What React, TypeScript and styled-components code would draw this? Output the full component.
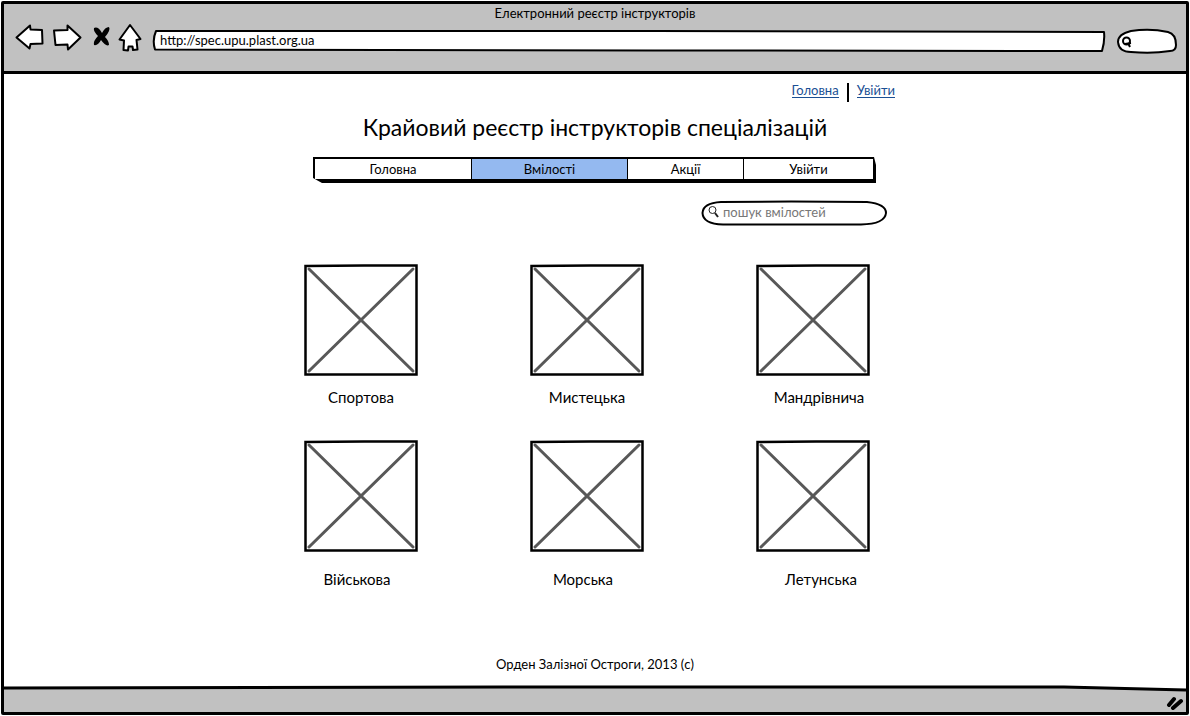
import React from "react";
import styled, { createGlobalStyle } from "styled-components";

const ink = "#000";
const chrome = "#c1c1c1";

const GlobalStyle = createGlobalStyle`
  * { box-sizing: border-box; }
  body {
    margin: 0;
    background: #fff;
    color: ${ink};
    font-family: Lato, "Noto Sans", sans-serif;
    font-size: 13px;
    line-height: 16px;
  }
  input, button { font: inherit; color: inherit; }
`;

const Window = styled.div`
  display: flex;
  flex-direction: column;
  min-height: 100vh;
  padding: 1px;
`;

const Frame = styled.div`
  flex: 1;
  display: flex;
  flex-direction: column;
  border: 3px solid ${ink};
  border-radius: 2px;
`;

const Chrome = styled.header`
  height: 70px;
  background: ${chrome};
  border-bottom: 3px solid ${ink};
`;

const WindowTitle = styled.div`
  padding-top: 1px;
  text-align: center;
`;

const Toolbar = styled.div`
  display: flex;
  align-items: center;
  padding: 0 8px 0 10px;
`;

const ToolButton = styled.button<{ $width: number }>`
  width: ${(p) => p.$width}px;
  height: 34px;
  padding: 0;
  border: 0;
  background: none;
  svg { display: block; }
`;

const Field = styled.label`
  position: relative;
  display: flex;
  align-items: center;
  height: 26px;
`;

const AddressField = styled(Field)`
  flex: 1;
  margin: 6px 12px 0 6px;
`;

const BrowserSearch = styled(Field)`
  width: 62px;
  margin-top: 6px;
`;

const Outline = styled.svg`
  position: absolute;
  inset: 0;
  width: 100%;
  height: 100%;
  overflow: visible;
  pointer-events: none;
`;

const FieldIcon = styled.svg`
  position: relative;
  flex: none;
`;

const TextInput = styled.input`
  position: relative;
  flex: 1;
  min-width: 0;
  padding: 0;
  border: 0;
  outline: 0;
  background: transparent;
  &::placeholder { color: #777; opacity: 1; }
`;

const AddressInput = styled(TextInput)`
  padding: 0 8px 2px;
`;

const Page = styled.main`
  flex: 1;
  display: flex;
  flex-direction: column;
  width: 100%;
  max-width: 600px;
  margin: 0 auto;
  padding-top: 9px;
`;

const AccountLinks = styled.nav`
  display: flex;
  justify-content: flex-end;
  gap: 8px;
  height: 19px;
`;

const AccountLink = styled.a`
  height: 15px;
  line-height: 14px;
  color: #1a4f94;
  text-decoration: none;
  border-bottom: 1px solid #1a4f94;
`;

const Divider = styled.span`
  width: 2px;
  background: ${ink};
`;

const Heading = styled.h1`
  margin: 10px 0 0;
  font-size: 23px;
  font-weight: 400;
  line-height: 30px;
  text-align: center;
  white-space: nowrap;
`;

const MenuBar = styled.nav`
  display: grid;
  grid-template-columns: 156fr 156fr 116fr 130fr;
  margin: 15px 19px 0 18px;
  height: 26px;
  border: solid ${ink};
  border-width: 2px 3px 4px 2px;
  clip-path: polygon(0 0, calc(100% - 2px) 0, 100% 8px, 100% 100%, 9px 100%, 0 21px);
`;

const MenuItem = styled.a<{ $active?: boolean }>`
  color: inherit;
  text-align: center;
  text-decoration: none;
  line-height: 20px;
  background: ${(p) => (p.$active ? "#94b9f0" : "#fff")};
  & + & { border-left: 1px solid ${ink}; }
`;

const SkillSearch = styled(Field)`
  align-self: flex-end;
  width: 186px;
  height: 26px;
  margin: 17px 8px 0 0;
  padding: 0 12px 2px 7px;
  gap: 4px;
`;

const Gallery = styled.div`
  display: flex;
  flex-direction: column;
  gap: 34px;
  padding: 38px 0 0 9px;
`;

const GalleryRow = styled.div<{ $gap: number; $last: number; $inset: number }>`
  display: grid;
  grid-template-columns: 114px 114px ${(p) => p.$last}px;
  column-gap: 112px;
  figure { gap: ${(p) => p.$gap}px; }
  figcaption { padding-right: ${(p) => p.$inset}px; }
`;

const Card = styled.figure`
  display: flex;
  flex-direction: column;
  margin: 0;
`;

const Caption = styled.figcaption`
  font-size: 15px;
  line-height: 18px;
  text-align: center;
`;

const Copyright = styled.footer`
  margin: auto 0 0;
  padding: 24px 0 15px;
  text-align: center;
`;

const StatusBar = styled.div`
  position: relative;
  display: flex;
  align-items: center;
  justify-content: flex-end;
  height: 25px;
  padding: 6px 2px 0 0;
  background: ${chrome};
`;

const Placeholder = () => (
  <svg width="114" height="112" fill="none" aria-hidden="true">
    <path d="M5 5L109 107M109 5L5 107" stroke="#585858" strokeWidth="3" strokeLinecap="round" />
    <path d="M1.500 2L60 1.500L112.500 1.500L112.500 110.500L1.500 110.500Z" stroke={ink} strokeWidth="2.500" />
  </svg>
);

const rows = [
  { gap: 12, last: 126, inset: 0, names: ["Спортова", "Мистецька", "Мандрівнича"] },
  { gap: 18, last: 138, inset: 8, names: ["Військова", "Морська", "Летунська"] },
];

export default function App() {
  return (
    <Window>
      <GlobalStyle />
      <Frame>
        <Chrome>
          <WindowTitle>Електронний реєстр інструкторів</WindowTitle>
          <Toolbar>
            <ToolButton $width={36} aria-label="Назад">
              <svg width="36" height="34" fill="#fff" stroke={ink} strokeWidth="2" strokeLinejoin="round">
                <path d="M2.500 16.500L16 4.500L16.500 8.500L28 9L28.500 22.500L16.500 23L15.500 27.500Z" />
              </svg>
            </ToolButton>
            <ToolButton $width={40} aria-label="Вперед">
              <svg width="40" height="34" fill="#fff" stroke={ink} strokeWidth="2" strokeLinejoin="round">
                <path d="M4 9.500L17.500 9L17.500 4.500L30.500 16.500L18 28.500L17.500 23.500L5.500 24Z" />
              </svg>
            </ToolButton>
            <ToolButton $width={28} aria-label="Зупинити">
              <svg width="28" height="34" fill={ink}>
                <path d="M4 7Q8 5 12 12Q15 6 19 6Q21 9 15 16Q19 20 19 24Q16 26 11 19Q8 25 4 24Q3 20 8 15Q3 10 4 7Z" />
              </svg>
            </ToolButton>
            <ToolButton $width={28} aria-label="Додому">
              <svg width="28" height="34" fill="#fff" stroke={ink} strokeWidth="2" strokeLinejoin="round">
                <path d="M12 4L22.500 18L18.500 19L19.500 28.500L15 29L14.500 25.500L10.500 25.500L10 29.500L5.500 29L6 19.500L1.500 18.500Z" />
              </svg>
            </ToolButton>
            <AddressField>
              <Outline viewBox="0 0 948 26" preserveAspectRatio="none" aria-hidden="true">
                <path
                  d="M4 3L500 3L948 4Q949 13 946 23L500 22.500L3 21.500Q0 12 4 3Z"
                  fill="#fff" stroke={ink} strokeWidth="2" strokeLinejoin="round"
                />
              </Outline>
              <AddressInput aria-label="Адреса" defaultValue="http://spec.upu.plast.org.ua" />
            </AddressField>
            <BrowserSearch>
              <Outline viewBox="0 0 62 26" preserveAspectRatio="none" aria-hidden="true">
                <path
                  d="M15 3Q34 0 52 4Q60 6 60 17Q60 23 54 23Q36 26 15 24Q3 24 2 14Q2 6 15 3Z"
                  fill="#fff" stroke={ink} strokeWidth="2"
                />
              </Outline>
              <FieldIcon width="17" height="26" fill="none" stroke={ink} strokeWidth="2" aria-hidden="true">
                <circle cx="10.500" cy="13" r="3.500" />
                <path d="M9 16L15 15M12 15L14 19" />
              </FieldIcon>
              <TextInput aria-label="Пошук" />
            </BrowserSearch>
          </Toolbar>
        </Chrome>

        <Page>
          <AccountLinks>
            <AccountLink href="#home">Головна</AccountLink>
            <Divider />
            <AccountLink href="#login">Увійти</AccountLink>
          </AccountLinks>
          <Heading>Крайовий реєстр інструкторів спеціалізацій</Heading>
          <MenuBar>
            <MenuItem href="#home">Головна</MenuItem>
            <MenuItem href="#skills" $active>Вмілості</MenuItem>
            <MenuItem href="#events">Акції</MenuItem>
            <MenuItem href="#login">Увійти</MenuItem>
          </MenuBar>
          <SkillSearch>
            <Outline viewBox="0 0 186 26" preserveAspectRatio="none" aria-hidden="true">
              <path
                d="M20 2L90 1.500L166 2Q185 4 185 13Q184 24 160 24.500L22 24.500Q2 24 1.500 13Q2 3 20 2Z"
                fill="#fff" stroke={ink} strokeWidth="2"
              />
            </Outline>
            <FieldIcon width="11" height="14" fill="none" stroke="#222" aria-hidden="true">
              <circle cx="4.500" cy="5" r="3.500" />
              <path d="M7 8L10 12" strokeWidth="2" />
            </FieldIcon>
            <TextInput aria-label="Пошук вмілостей" placeholder="пошук вмілостей" />
          </SkillSearch>
          <Gallery>
            {rows.map((row) => (
              <GalleryRow key={row.names[0]} $gap={row.gap} $last={row.last} $inset={row.inset}>
                {row.names.map((name) => (
                  <Card key={name}>
                    <Placeholder />
                    <Caption>{name}</Caption>
                  </Card>
                ))}
              </GalleryRow>
            ))}
          </Gallery>
          <Copyright>Орден Залізної Остроги, 2013 (c)</Copyright>
        </Page>

        <StatusBar>
          <Outline viewBox="0 0 1182 25" preserveAspectRatio="none" aria-hidden="true">
            <path d="M0 0L1060 0L1182 3L1182 -3L0 -3Z" fill="#fff" />
            <path d="M0 1L500 0L1060 0L1182 3" fill="none" stroke={ink} strokeWidth="3" />
          </Outline>
          <FieldIcon width="18" height="14" stroke={ink} strokeWidth="4" strokeLinecap="round" aria-hidden="true">
            <path d="M3 9L8 3M7 12L15 5" />
          </FieldIcon>
        </StatusBar>
      </Frame>
    </Window>
  );
}
